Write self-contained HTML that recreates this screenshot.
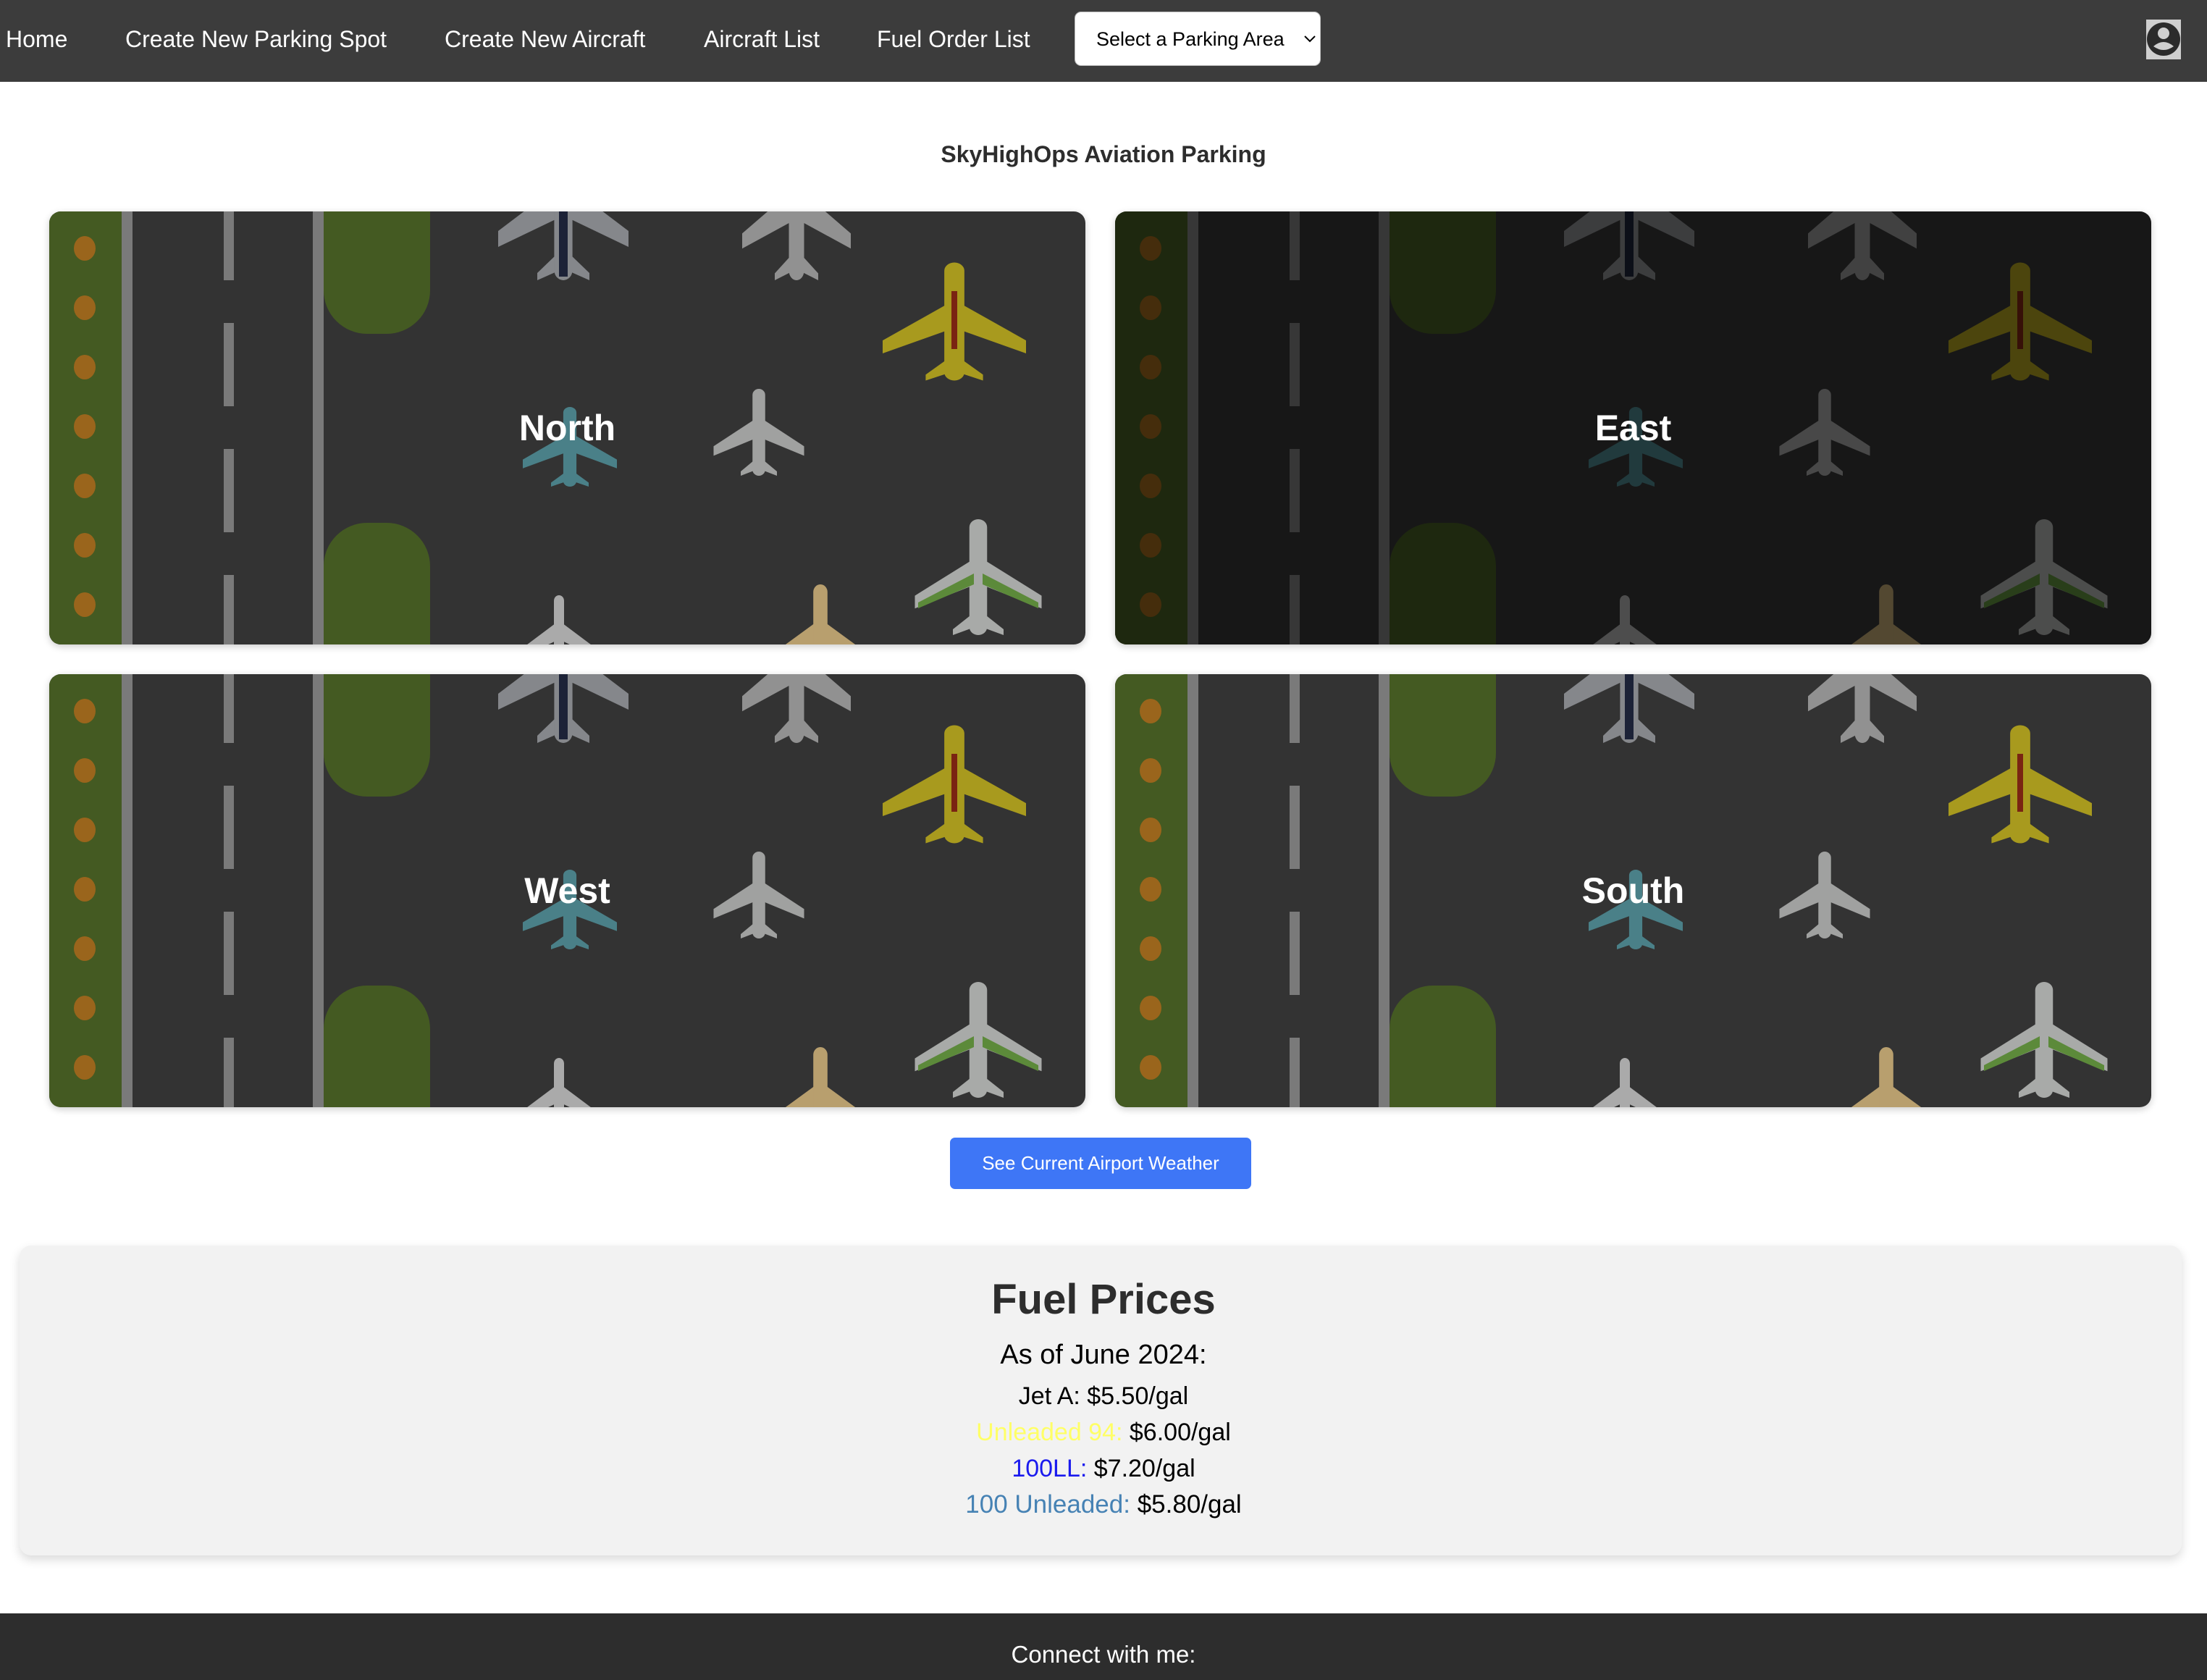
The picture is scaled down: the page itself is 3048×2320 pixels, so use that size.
<!DOCTYPE html>
<html><head><meta charset="utf-8"><style>
html,body{margin:0;padding:0;}
body{width:3048px;height:2320px;position:relative;overflow:hidden;background:#fff;font-family:"Liberation Sans",Arial,sans-serif;}
.nav{position:absolute;left:0;top:0;width:3048px;height:113px;background:#3c3c3c;}
.nav a{position:absolute;top:38px;font-size:32px;line-height:33px;color:#fff;text-decoration:none;white-space:nowrap;}
.sel{position:absolute;left:1484px;top:16px;width:340px;height:75px;background:#fff;border:1px solid #bbb;border-radius:9px;box-sizing:border-box;}
.sel span{position:absolute;left:29px;top:23px;font-size:27px;line-height:28px;color:#000;}
.user{position:absolute;left:2964px;top:27px;width:48px;height:55px;background:#cfcfcf;}
.title{position:absolute;left:0;width:3048px;top:197px;text-align:center;font-weight:bold;font-size:32px;line-height:32px;color:#2d2d2d;}
.card{position:absolute;width:1431px;height:598px;border-radius:16px;overflow:hidden;box-shadow:0 3px 10px rgba(0,0,0,0.2);}
.card svg{position:absolute;left:0;top:0;}
.card .lbl{position:absolute;left:0;top:0;width:100%;height:100%;display:flex;align-items:center;justify-content:center;color:#fff;font-weight:bold;font-size:50px;}
.dim{position:absolute;left:0;top:0;width:100%;height:100%;background:rgba(0,0,0,0.55);}
.btn{position:absolute;left:1312px;top:1571px;width:416px;height:71px;background:#3e76f6;border-radius:7px;color:#fff;font-size:26px;display:flex;align-items:center;justify-content:center;}
.fuel{position:absolute;left:27px;top:1720px;width:2986px;height:428px;background:#f2f2f2;border-radius:16px;box-shadow:0 6px 14px rgba(0,0,0,0.15);}
.t{position:absolute;left:0;width:3048px;text-align:center;white-space:nowrap;}
.foot{position:absolute;left:0;top:2228px;width:3048px;height:92px;background:#2d2d2d;}
</style></head><body>
<svg width="0" height="0" style="position:absolute">
<defs>
<g id="pl">
<polygon points="-6,-14 -50,16 -50,27 -6,8"/>
<polygon points="6,-14 50,16 50,27 6,8"/>
<polygon points="-5,32 -20,45 -20,50 -5,44"/>
<polygon points="5,32 20,45 20,50 5,44"/>
<rect x="-7" y="-50" width="14" height="100" rx="7"/>
</g>
<g id="bg">
<rect x="0" y="0" width="1431" height="598" fill="#333333"/>
<rect x="0" y="0" width="100" height="598" fill="#445a22"/>
<g fill="#9a651c">
<ellipse cx="49" cy="51" rx="15" ry="17"/><ellipse cx="49" cy="133" rx="15" ry="17"/><ellipse cx="49" cy="215" rx="15" ry="17"/><ellipse cx="49" cy="297" rx="15" ry="17"/><ellipse cx="49" cy="379" rx="15" ry="17"/><ellipse cx="49" cy="461" rx="15" ry="17"/><ellipse cx="49" cy="543" rx="15" ry="17"/>
</g>
<rect x="100" y="0" width="15" height="598" fill="#7a7a7a"/>
<g fill="#7a7a7a">
<rect x="241" y="-20" width="14" height="115"/><rect x="241" y="154" width="14" height="115"/><rect x="241" y="328" width="14" height="115"/><rect x="241" y="502" width="14" height="115"/>
</g>
<rect x="364" y="0" width="15" height="598" fill="#7a7a7a"/>
<path d="M379,-10 H526 V109 A60,60 0 0 1 466,169 H439 A60,60 0 0 1 379,109 Z" fill="#445a22"/>
<path d="M379,608 H526 V490 A60,60 0 0 0 466,430 H439 A60,60 0 0 0 379,490 Z" fill="#445a22"/>
<use href="#pl" fill="#85878b" transform="translate(710,-5) scale(1.8,2)"/>
<rect x="704" y="-10" width="12" height="100" fill="#1c2237"/>
<use href="#pl" fill="#919191" transform="translate(1032,0) scale(1.5,1.9)"/>
<use href="#pl" fill="#a89a1e" transform="translate(1250,152) scale(1.98,1.63)"/>
<rect x="1246" y="110" width="8" height="80" fill="#7a2412"/>
<use href="#pl" fill="#4a8088" transform="translate(719,325) scale(1.3,1.1)"/>
<use href="#pl" fill="#a0a1a0" transform="translate(980,305) scale(1.25,1.2)"/>
<use href="#pl" fill="#a8aaa8" transform="translate(1283,505) scale(1.75,1.6)"/>
<polygon points="1277,500 1200,540 1200,548 1277,515" fill="#5c8a3a"/>
<polygon points="1289,500 1366,540 1366,548 1289,515" fill="#5c8a3a"/>
<use href="#pl" fill="#aaaaaa" transform="translate(704,585) scale(1,1.1)"/>
<use href="#pl" fill="#b89f6e" transform="translate(1065,590) scale(1.4,1.5)"/>
</g>
</defs></svg>

<div class="nav">
<a style="left:8px">Home</a>
<a style="left:173px">Create New Parking Spot</a>
<a style="left:614px">Create New Aircraft</a>
<a style="left:972px">Aircraft List</a>
<a style="left:1211px">Fuel Order List</a>
<div class="sel"><span>Select a Parking Area</span>
<svg style="position:absolute;left:316px;top:32px" width="16" height="10" viewBox="0 0 16 10"><path d="M1,1 L8,8 L15,1" fill="none" stroke="#000" stroke-width="2"/></svg></div>
<div class="user"><svg width="48" height="55" viewBox="0 0 48 55"><circle cx="24" cy="27" r="23" fill="#2b2b2b"/><circle cx="24" cy="19" r="8" fill="#cfcfcf"/><path d="M10,37 Q24,25 38,37 Q24,47 10,37 Z" fill="#cfcfcf"/></svg></div>
</div>

<div class="title">SkyHighOps Aviation Parking</div>

<div class="card" style="left:68px;top:292px"><svg width="1431" height="598" viewBox="0 0 1431 598"><use href="#bg"/></svg><div class="lbl">North</div></div>
<div class="card" style="left:1540px;top:292px"><svg width="1431" height="598" viewBox="0 0 1431 598"><use href="#bg"/></svg><div class="dim"></div><div class="lbl">East</div></div>
<div class="card" style="left:68px;top:931px"><svg width="1431" height="598" viewBox="0 0 1431 598"><use href="#bg"/></svg><div class="lbl">West</div></div>
<div class="card" style="left:1540px;top:931px"><svg width="1431" height="598" viewBox="0 0 1431 598"><use href="#bg"/></svg><div class="lbl">South</div></div>

<div class="btn">See Current Airport Weather</div>

<div class="fuel"></div>
<div class="t" style="top:1766px;font-size:58px;line-height:58px;font-weight:bold;color:#2d2d2d">Fuel Prices</div>
<div class="t" style="top:1853px;font-size:38px;line-height:36px;color:#000">As of June 2024:</div>
<div class="t" style="top:1911px;font-size:34px;line-height:34px;color:#000">Jet A: $5.50/gal</div>
<div class="t" style="top:1961px;font-size:34px;line-height:34px;color:#000"><span style="color:#ffff66">Unleaded 94:</span> $6.00/gal</div>
<div class="t" style="top:2011px;font-size:34px;line-height:34px;color:#000"><span style="color:#1a1aee">100LL:</span> $7.20/gal</div>
<div class="t" style="top:2061px;font-size:35px;line-height:34px;color:#000"><span style="color:#4682b4">100 Unleaded:</span> $5.80/gal</div>

<div class="foot"></div>
<div class="t" style="top:2268px;font-size:33px;line-height:33px;color:#fff">Connect with me:</div>
</body></html>
